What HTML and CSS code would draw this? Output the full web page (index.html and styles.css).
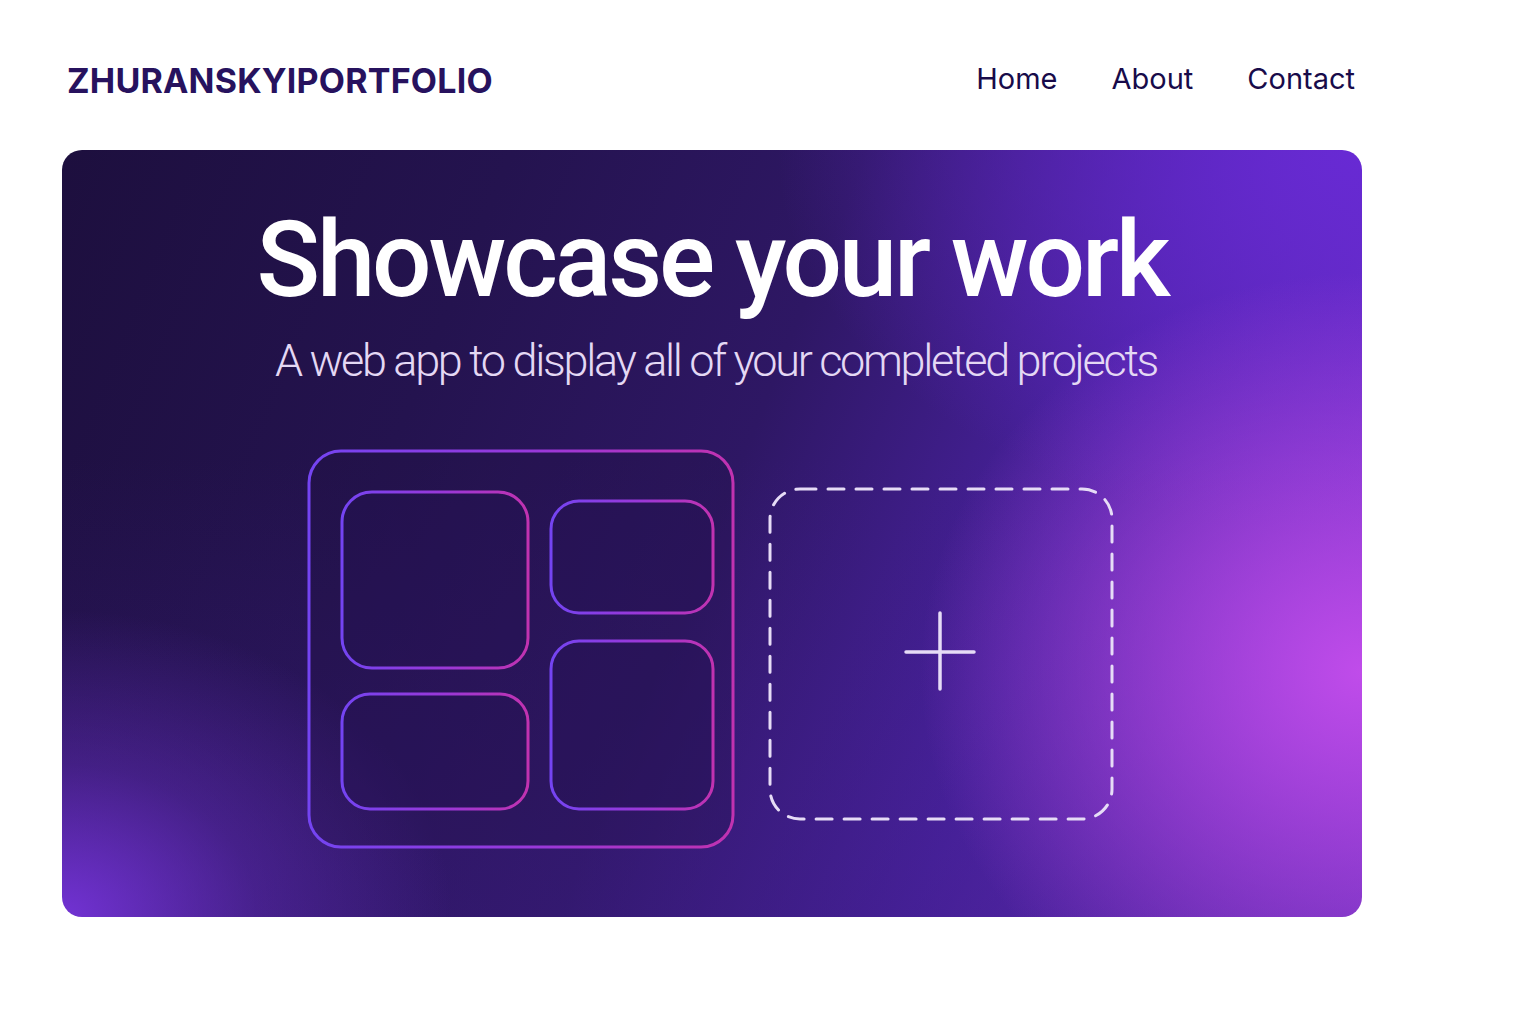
FILE: index.html
```html
<!DOCTYPE html>
<html lang="en">
<head>
<meta charset="utf-8">
<title>ZhuranskyiPortfolio</title>
<link rel="stylesheet" href="styles.css">
</head>
<body>
<div class="page">
  <header class="header">
    <div class="logo">ZHURANSKYIPORTFOLIO</div>
    <nav class="nav">
      <a href="#">Home</a>
      <a href="#">About</a>
      <a href="#">Contact</a>
    </nav>
  </header>
  <section class="hero">
    <h1 class="title">Showcase your work</h1>
    <p class="subtitle">A web app to display all of your completed projects</p>
    <div class="art">
      <svg class="grid-art" width="430" height="402" viewBox="0 0 430 402">
        <defs>
          <linearGradient id="g1" x1="0" y1="0" x2="1" y2="0">
            <stop offset="0" stop-color="#7444f2"/>
            <stop offset="0.55" stop-color="#9a38d8"/>
            <stop offset="1" stop-color="#c132b0"/>
          </linearGradient>
        </defs>
        <rect x="3" y="3" width="424" height="396" rx="32" fill="rgba(30,14,64,0.25)" stroke="url(#g1)" stroke-width="3"/>
        <g stroke="url(#g1)" stroke-width="3" fill="rgba(38,18,82,0.35)">
          <rect x="36" y="44" width="186" height="176" rx="30"/>
          <rect x="245" y="53" width="162" height="112" rx="28"/>
          <rect x="36" y="246" width="186" height="115" rx="28"/>
          <rect x="245" y="193" width="162" height="168" rx="28"/>
        </g>
      </svg>
      <svg class="add-art" width="346" height="334" viewBox="0 0 346 334">
        <rect x="2" y="2" width="342" height="330" rx="30" fill="none" stroke="#e6dcf6" stroke-width="3" stroke-dasharray="16 12" stroke-linecap="round"/>
        <g stroke="#e6dcf6" stroke-width="3.5" stroke-linecap="round">
          <line x1="138" y1="165" x2="206" y2="165"/>
          <line x1="172" y1="126" x2="172" y2="202"/>
        </g>
      </svg>
    </div>
  </section>
</div>
</body>
</html>
```
FILE: styles.css
```css
* { box-sizing: border-box; }

body {
  margin: 0;
  background: #ffffff;
  font-family: Inter, "Noto Sans", "Liberation Sans", sans-serif;
}

.page {
  width: 1300px;
  margin-left: 62px;
}

.header {
  display: flex;
  align-items: center;
  justify-content: space-between;
  height: 150px;
  padding: 6px 7px 0 5px;
}

.logo {
  font-size: 34px;
  font-weight: 700;
  color: #27125e;
  letter-spacing: 0.2px;
  padding-top: 4px;
}

.nav {
  display: flex;
  gap: 54px;
}

.nav a {
  font-size: 29px;
  font-weight: 400;
  color: #180b4a;
  text-decoration: none;
}

.hero {
  border-radius: 20px;
  padding: 58px 0 67px;
  display: flex;
  flex-direction: column;
  align-items: center;
  background:
    radial-gradient(ellipse 34% 52% at 100% 68%, rgba(192, 76, 234, 1) 0%, rgba(192, 76, 234, 0.55) 45%, rgba(192, 76, 234, 0) 100%),
    radial-gradient(ellipse 30% 40% at 0% 100%, rgba(118, 52, 218, 0.95) 0%, rgba(118, 52, 218, 0.35) 50%, rgba(118, 52, 218, 0) 100%),
    radial-gradient(ellipse 45% 50% at 100% 0%, rgba(104, 42, 212, 1) 0%, rgba(104, 42, 212, 0) 100%),
    linear-gradient(180deg, rgba(0,0,0,0) 40%, rgba(60, 28, 130, 0.4) 100%),
    linear-gradient(112deg, #1d0f3e 0%, #24134f 28%, #2e1764 50%, #4a22a2 72%, #7c36d8 100%);
}

.title {
  margin: 0;
  font-family: Roboto, "Liberation Sans", sans-serif;
  font-size: 105px;
  line-height: 1;
  font-weight: 500;
  color: #ffffff;
  letter-spacing: -3.2px;
}

.subtitle {
  margin: 25px 0 0;
  font-family: Roboto, "Liberation Sans", sans-serif;
  font-size: 45px;
  line-height: 1;
  font-weight: 300;
  color: #e4d8f4;
  letter-spacing: -2.3px;
  padding-left: 8px;
}

.art {
  margin-top: 65px;
  margin-right: 5px;
  display: flex;
  align-items: flex-start;
  gap: 32px;
}

.art svg { display: block; }

.add-art { margin-top: 39px; }
```
